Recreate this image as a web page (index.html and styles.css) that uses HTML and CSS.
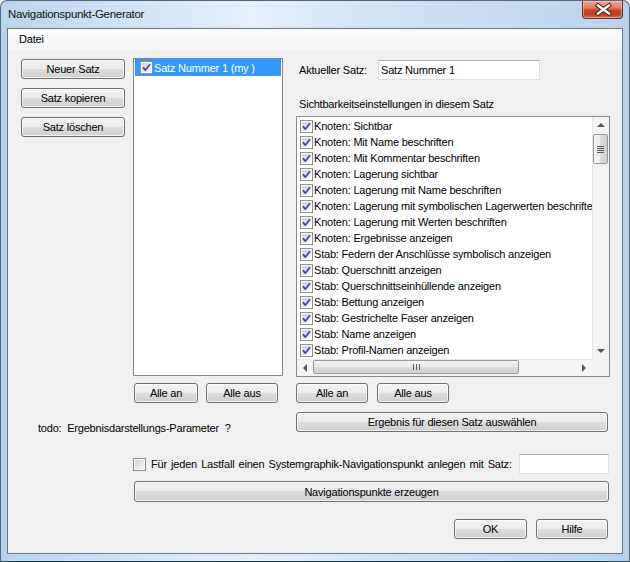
FILE: index.html
```html
<!DOCTYPE html>
<html lang="de">
<head>
    <meta charset="UTF-8">
    <title>Navigationspunkt-Generator</title>
    <link rel="stylesheet" href="styles.css">
</head>
<body>
    <!-- Checkbox-Grafiken, werden per <use> eingesetzt -->
    <svg class="defs" width="0" height="0" aria-hidden="true">
        <defs>
            <linearGradient id="cbFill" x1="0" y1="0" x2="1" y2="1">
                <stop offset="0" stop-color="#cdd2da"/>
                <stop offset="1" stop-color="#f8f9fb"/>
            </linearGradient>
            <symbol id="cbOn" viewBox="0 0 13 13">
                <rect x="0.5" y="0.5" width="12" height="12" fill="#fdfdfd" stroke="#8e8f8f"/>
                <rect x="2" y="2" width="9" height="9" fill="url(#cbFill)"/>
                <path d="M3 6.4 5.3 9 10 3.3" fill="none" stroke="#4347a8" stroke-width="1.8"/>
            </symbol>
            <symbol id="cbOff" viewBox="0 0 13 13">
                <rect x="0.5" y="0.5" width="12" height="12" fill="#fdfdfd" stroke="#8e8f8f"/>
                <rect x="2" y="2" width="9" height="9" fill="url(#cbFill)"/>
            </symbol>
        </defs>
    </svg>

    <div class="window">
        <div class="titlebar">
            <span class="title">Navigationspunkt-Generator</span>
            <button class="close" type="button">
                <svg width="41" height="17" viewBox="0 0 41 17">
                    <path d="M15 4.5 26 12.5M26 4.5 15 12.5" stroke="#4a1a12" stroke-width="4.4" stroke-linecap="square"/>
                    <path d="M15 4.5 26 12.5M26 4.5 15 12.5" stroke="#fff" stroke-width="2.4" stroke-linecap="square"/>
                </svg>
            </button>
        </div>

        <div class="client">
            <div class="menubar"><span>Datei</span></div>

            <div class="content">
                <div class="main">
                    <div class="side">
                        <button class="btn">Neuer Satz</button>
                        <button class="btn">Satz kopieren</button>
                        <button class="btn">Satz löschen</button>
                    </div>

                    <div class="set-list">
                        <div class="set-item"><svg class="cb"><use href="#cbOn"/></svg><span>Satz Nummer 1 (my )</span></div>
                    </div>

                    <div class="vis-col">
                        <div class="current">
                            <label>Aktueller Satz:</label>
                            <input class="field" type="text" value="Satz Nummer 1">
                        </div>
                        <div class="caption">Sichtbarkeitseinstellungen in diesem Satz</div>
                        <div class="vis-list">
                            <div class="items">
                                <div class="item"><svg class="cb"><use href="#cbOn"/></svg><span>Knoten: Sichtbar</span></div>
                                <div class="item"><svg class="cb"><use href="#cbOn"/></svg><span>Knoten: Mit Name beschriften</span></div>
                                <div class="item"><svg class="cb"><use href="#cbOn"/></svg><span>Knoten: Mit Kommentar beschriften</span></div>
                                <div class="item"><svg class="cb"><use href="#cbOn"/></svg><span>Knoten: Lagerung sichtbar</span></div>
                                <div class="item"><svg class="cb"><use href="#cbOn"/></svg><span>Knoten: Lagerung mit Name beschriften</span></div>
                                <div class="item"><svg class="cb"><use href="#cbOn"/></svg><span>Knoten: Lagerung mit symbolischen Lagerwerten beschriften</span></div>
                                <div class="item"><svg class="cb"><use href="#cbOn"/></svg><span>Knoten: Lagerung mit Werten beschriften</span></div>
                                <div class="item"><svg class="cb"><use href="#cbOn"/></svg><span>Knoten: Ergebnisse anzeigen</span></div>
                                <div class="item"><svg class="cb"><use href="#cbOn"/></svg><span>Stab: Federn der Anschlüsse symbolisch anzeigen</span></div>
                                <div class="item"><svg class="cb"><use href="#cbOn"/></svg><span>Stab: Querschnitt anzeigen</span></div>
                                <div class="item"><svg class="cb"><use href="#cbOn"/></svg><span>Stab: Querschnittseinhüllende anzeigen</span></div>
                                <div class="item"><svg class="cb"><use href="#cbOn"/></svg><span>Stab: Bettung anzeigen</span></div>
                                <div class="item"><svg class="cb"><use href="#cbOn"/></svg><span>Stab: Gestrichelte Faser anzeigen</span></div>
                                <div class="item"><svg class="cb"><use href="#cbOn"/></svg><span>Stab: Name anzeigen</span></div>
                                <div class="item"><svg class="cb"><use href="#cbOn"/></svg><span>Stab: Profil-Namen anzeigen</span></div>
                                <div class="item"><svg class="cb"><use href="#cbOn"/></svg><span>Stab: Kommentar anzeigen</span></div>
                            </div>
                            <div class="vscroll">
                                <div class="arrow up"></div>
                                <div class="vthumb"><i></i></div>
                                <div class="fill"></div>
                                <div class="arrow down"></div>
                            </div>
                            <div class="hscroll">
                                <div class="arrow left"></div>
                                <div class="hthumb"><i></i></div>
                                <div class="fill"></div>
                                <div class="arrow right"></div>
                            </div>
                            <div class="corner"></div>
                        </div>
                    </div>

                    <div class="pair pair-sets">
                        <button class="btn w64">Alle an</button>
                        <button class="btn w72">Alle aus</button>
                    </div>
                    <div class="pair pair-vis">
                        <button class="btn w72">Alle an</button>
                        <button class="btn w72">Alle aus</button>
                    </div>

                    <div class="todo">todo:&nbsp; Ergebnisdarstellungs-Parameter &nbsp;?</div>
                    <button class="btn pick">Ergebnis für diesen Satz auswählen</button>
                </div>

                <div class="lastfall">
                    <svg class="cb"><use href="#cbOff"/></svg>
                    <span class="lastfall-text">Für jeden Lastfall einen Systemgraphik-Navigationspunkt anlegen mit Satz:</span>
                    <input class="field small" type="text">
                </div>

                <button class="btn generate">Navigationspunkte erzeugen</button>

                <div class="actions">
                    <button class="btn ok">OK</button>
                    <button class="btn help">Hilfe</button>
                </div>
            </div>
        </div>
    </div>
</body>
</html>
```

FILE: styles.css
```css
* {
    box-sizing: border-box;
}
body {
    margin: 0;
    background: #fff;
    font-family: "Liberation Sans", Arial, sans-serif;
    font-size: 11px;
    letter-spacing: -0.2px;
    color: #000;
}
.defs {
    position: absolute;
}

/* Fensterrahmen */
.window {
    width: 630px;
    height: 562px;
    padding: 0 6px 7px;
    border: 1px solid #53687e;
    border-bottom-color: #1f4654;
    border-radius: 7px 7px 0 0;
    background: linear-gradient(90deg, #bad3ed 0%, #d3e4f6 22%, #e6effa 40%, #d2e3f5 60%, #c6dbf1 80%, #b9d2ec 100%);
    display: flex;
    flex-direction: column;
}
.titlebar {
    height: 27px;
    display: flex;
    align-items: flex-start;
    justify-content: space-between;
}
.title {
    margin: 6px 0 0 1px;
    line-height: 14px;
    font-size: 11.5px;
    letter-spacing: -0.3px;
    color: #111;
}
.close {
    width: 41px;
    height: 18px;
    padding: 0;
    border: 1px solid #6e2b1e;
    border-top: none;
    border-radius: 0 0 4px 4px;
    background: linear-gradient(#e8ad9b, #dc7d66 40%, #c9432b 55%, #c13e26 80%, #d9734f);
    box-shadow: inset 0 0 0 1px rgba(255, 220, 210, 0.45);
}
.close svg {
    display: block;
}

/* Inhalt */
.client {
    flex: 1;
    border: 1px solid #6c7886;
    background: #f0f0f0;
    display: flex;
    flex-direction: column;
}
.menubar {
    height: 21px;
    line-height: 21px;
    padding-left: 11px;
    background: linear-gradient(#fbfcfd, #f3f5f7);
}
.content {
    padding: 8px 0 0 13px;
}
.main {
    display: grid;
    grid-template-columns: 112px 163px 314px;
    align-items: start;
}

.btn {
    font: inherit;
    letter-spacing: inherit;
    color: #000;
    height: 20px;
    padding: 0;
    border: 1px solid #707070;
    border-radius: 3px;
    background: linear-gradient(#f3f3f3, #ebebeb 50%, #dddddd 50%, #cfcfcf);
    box-shadow: inset 0 0 0 1px rgba(255, 255, 255, 0.75);
    cursor: pointer;
}
.w64 { width: 64px; }
.w72 { width: 72px; }

.side {
    display: flex;
    flex-direction: column;
    gap: 9px;
    padding-top: 1px;
}
.side .btn {
    width: 104px;
}

.cb {
    width: 13px;
    height: 13px;
    flex: none;
}

/* Liste der Sätze */
.set-list {
    width: 150px;
    height: 318px;
    padding: 0 1px;
    border: 1px solid #828790;
    background: #fff;
}
.set-item {
    height: 17px;
    padding-left: 5px;
    display: flex;
    align-items: center;
    background: #3399ff;
    color: #fff;
}
.set-item span {
    margin-left: 1px;
}

/* Sichtbarkeiten */
.current {
    display: flex;
    align-items: center;
    height: 20px;
    margin-top: 2px;
}
.current label {
    width: 82px;
    padding-left: 3px;
}
.field {
    font: inherit;
    letter-spacing: inherit;
    height: 20px;
    padding: 0 2px;
    border: 1px solid #dbdfe6;
    border-top-color: #abadb3;
    background: #fff;
}
.current .field {
    width: 162px;
}
.caption {
    margin-top: 17px;
    line-height: 14px;
    padding-left: 3px;
}
.vis-list {
    margin-top: 5px;
    width: 314px;
    height: 261px;
    border: 1px solid #828790;
    background: #fff;
    display: grid;
    grid-template-columns: 1fr 17px;
    grid-template-rows: 1fr 17px;
}
.items {
    overflow: hidden;
    padding-top: 1px;
}
.item {
    height: 16px;
    padding-left: 3px;
    display: flex;
    align-items: center;
    white-space: nowrap;
}
.item span {
    margin-left: 1px;
}

/* Bildlaufleisten */
.vscroll, .hscroll {
    display: flex;
    background: #f4f4f4;
}
.vscroll {
    flex-direction: column;
    border-left: 1px solid #e6e6e6;
}
.hscroll {
    border-top: 1px solid #e6e6e6;
}
.fill {
    flex: 1;
}
.corner {
    background: #f0f0f0;
}
.arrow {
    width: 16px;
    height: 16px;
    flex: none;
    display: flex;
    align-items: center;
    justify-content: center;
}
.arrow::after {
    content: "";
    border: 4px solid transparent;
}
.arrow.up::after { border-bottom: 4px solid #555; border-top-width: 0; }
.arrow.down::after { border-top: 4px solid #555; border-bottom-width: 0; }
.arrow.left::after { border-right: 4px solid #555; border-left-width: 0; }
.arrow.right::after { border-left: 4px solid #555; border-right-width: 0; }

.vthumb, .hthumb {
    border: 1px solid #989898;
    border-radius: 2px;
    display: flex;
    align-items: center;
    justify-content: center;
}
.vthumb {
    height: 30px;
    margin: 1px 1px 0 0;
    background: linear-gradient(90deg, #f6f6f6, #ebebeb 45%, #dadada 55%, #d0d0d0);
}
.vthumb i {
    width: 7px;
    height: 7px;
    background: repeating-linear-gradient(#5a5a5a 0 1px, transparent 1px 2px);
}
.hthumb {
    width: 206px;
    height: 14px;
    background: linear-gradient(#f6f6f6, #ebebeb 45%, #dadada 55%, #d0d0d0);
}
.hthumb i {
    width: 7px;
    height: 6px;
    background: repeating-linear-gradient(90deg, #5a5a5a 0 1px, transparent 1px 3px);
}

/* Schaltflächen unter den Listen */
.pair {
    display: flex;
    margin-top: 6px;
}
.pair-sets {
    grid-column: 2;
    gap: 8px;
    padding-left: 1px;
}
.pair-vis {
    grid-column: 3;
    gap: 9px;
}
.todo {
    grid-column: 1 / 3;
    margin-top: 18px;
    padding-left: 17px;
    line-height: 14px;
    white-space: nowrap;
}
.pick {
    grid-column: 3;
    width: 312px;
    margin-top: 9px;
}

.lastfall {
    display: flex;
    align-items: center;
    width: 476px;
    height: 20px;
    margin: 19px 0 0 112px;
}
.lastfall-text {
    margin-left: 5px;
    white-space: nowrap;
    word-spacing: 1.3px;
}
.field.small {
    width: 90px;
    margin-left: auto;
}
.generate {
    display: block;
    width: 475px;
    height: 21px;
    margin: 7px 0 0 113px;
}
.actions {
    display: flex;
    justify-content: flex-end;
    gap: 9px;
    width: 587px;
    margin-top: 17px;
}
.ok { width: 73px; }
.help { width: 72px; }
```
